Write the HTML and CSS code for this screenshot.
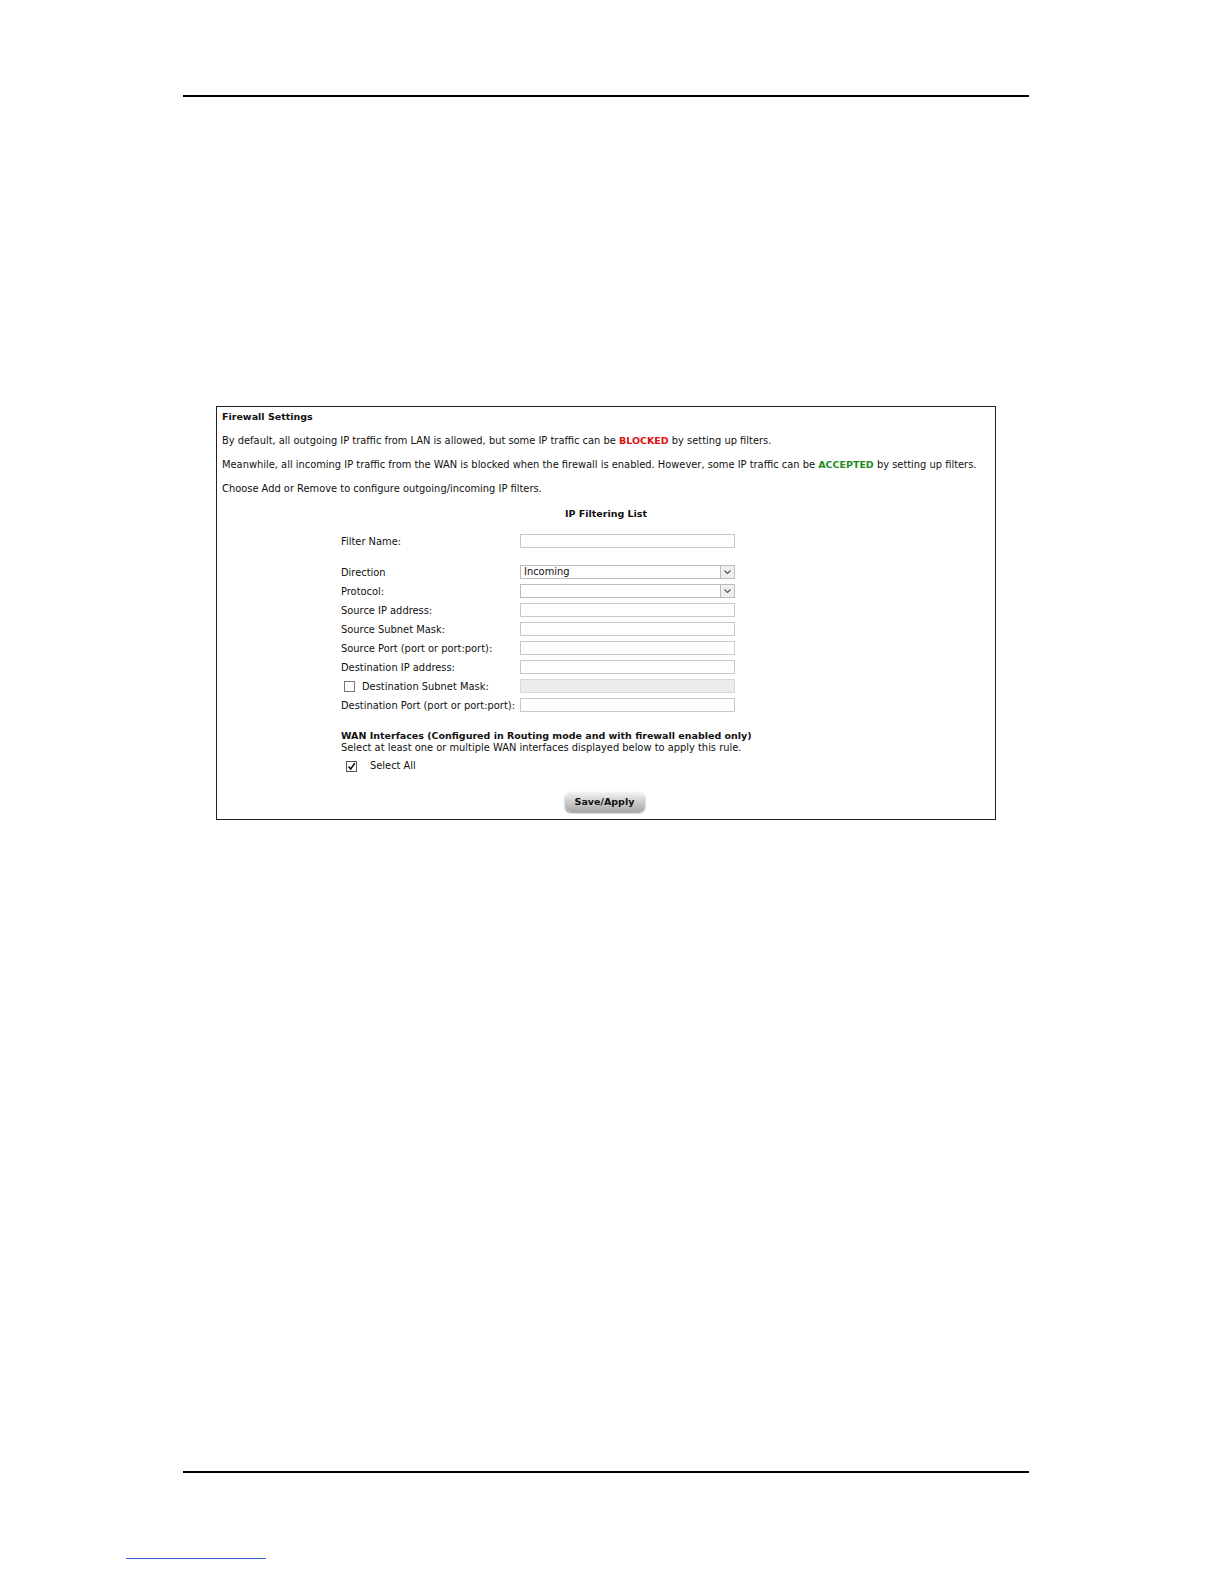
FILE: index.html
```html
<!DOCTYPE html>
<html>
<head>
<meta charset="utf-8">
<link rel="stylesheet" href="styles.css">
</head>
<body>
<div class="page">
  <div class="rule rule-top"></div>
  <div class="panel">
    <div class="title">Firewall Settings</div>
    <p class="line">By default, all outgoing IP traffic from LAN is allowed, but some IP traffic can be <span class="red">BLOCKED</span> by setting up filters.</p>
    <p class="line">Meanwhile, all incoming IP traffic from the WAN is blocked when the firewall is enabled. However, some IP traffic can be <span class="green">ACCEPTED</span> by setting up filters.</p>
    <p class="line">Choose Add or Remove to configure outgoing/incoming IP filters.</p>
    <div class="list-title">IP Filtering List</div>
    <div class="form">
      <div class="row row-name"><span class="label">Filter Name:</span><span class="field"></span></div>
      <div class="row row-dir"><span class="label">Direction</span><span class="field select"><span class="val">Incoming</span><span class="arrow"><svg width="9" height="6" viewBox="0 0 9 6"><path d="M1.5 1.5 L4.5 4.5 L7.5 1.5" fill="none" stroke="#555" stroke-width="1.2"/></svg></span></span></div>
      <div class="row"><span class="label">Protocol:</span><span class="field select"><span class="val"></span><span class="arrow"><svg width="9" height="6" viewBox="0 0 9 6"><path d="M1.5 1.5 L4.5 4.5 L7.5 1.5" fill="none" stroke="#555" stroke-width="1.2"/></svg></span></span></div>
      <div class="row"><span class="label">Source IP address:</span><span class="field"></span></div>
      <div class="row"><span class="label">Source Subnet Mask:</span><span class="field"></span></div>
      <div class="row"><span class="label">Source Port (port or port:port):</span><span class="field"></span></div>
      <div class="row"><span class="label">Destination IP address:</span><span class="field"></span></div>
      <div class="row"><span class="label"><span class="cb"></span>Destination Subnet Mask:</span><span class="field disabled"></span></div>
      <div class="row"><span class="label">Destination Port (port or port:port):</span><span class="field"></span></div>
    </div>
    <div class="wan">
      <div class="wan-title">WAN Interfaces (Configured in Routing mode and with firewall enabled only)</div>
      <div class="wan-sub">Select at least one or multiple WAN interfaces displayed below to apply this rule.</div>
      <div class="selall"><span class="cb checked"><svg width="9" height="9" viewBox="0 0 9 9"><path d="M1.5 4.5 L3.7 7 L7.8 1.3" fill="none" stroke="#111" stroke-width="1.6"/></svg></span>Select All</div>
    </div>
    <div class="btnrow"><span class="btn">Save/Apply</span></div>
  </div>
  <div class="spacer"></div>
  <div class="rule rule-bottom"></div>
  <div class="link-line"></div>
</div>
</body>
</html>
```

FILE: styles.css
```css
html, body {
  margin: 0;
  padding: 0;
  background: #fff;
}
.page {
  width: 1224px;
  height: 1584px;
  font-family: "DejaVu Sans", Verdana, sans-serif;
  font-size: 9.9px;
  color: #111;
  overflow: hidden;
}
.rule {
  height: 2px;
  background: #000;
  width: 846px;
  margin-left: 183px;
}
.rule-top {
  margin-top: 95px;
}
.panel {
  margin-top: 309px;
  margin-left: 216px;
  height: 412px;
  border: 1px solid #222;
  padding: 0 0 0 5px;
  width: 773px;
}
.title {
  font-weight: bold;
  margin-top: 3px;
  line-height: 14px;
  font-size: 9.5px;
}
.line {
  margin: 10px 0 0 0;
  line-height: 14px;
}
.red { color: #e01010; font-weight: bold; font-size: 9.5px; }
.green { color: #1d8a1d; font-weight: bold; font-size: 9.5px; }
.list-title {
  font-weight: bold;
  font-size: 9.5px;
  text-align: center;
  margin-top: 11px;
  line-height: 14px;
  padding-right: 5px;
}
.form {
  margin-top: 13px;
  margin-left: 119px;
  display: flex;
  flex-direction: column;
  gap: 5px;
}
.row {
  display: grid;
  grid-template-columns: 179px 215px;
  align-items: center;
  height: 14px;
}
.row-name {
  margin-bottom: 12px;
}
.label {
  display: flex;
  align-items: center;
  white-space: nowrap;
}
.field {
  height: 14px;
  box-sizing: border-box;
  border: 1px solid #c8c8c8;
  background: #fff;
}
.field.disabled {
  background: #ececea;
  border-color: #d8d8d6;
}
.select {
  display: flex;
  align-items: center;
  border-color: #bcbcbc;
}
.val {
  flex: 1;
  padding-left: 3px;
  line-height: 12px;
}
.arrow {
  width: 13px;
  height: 12px;
  border-left: 1px solid #bcbcbc;
  background: #efefef;
  display: flex;
  align-items: center;
  justify-content: center;
}
.cb {
  display: inline-flex;
  align-items: center;
  justify-content: center;
  width: 9px;
  height: 9px;
  border: 1px solid #777;
  background: #fff;
  margin: 0 7px 0 3px;
}
.wan {
  margin-top: 18px;
  margin-left: 119px;
}
.wan-title {
  font-weight: bold;
  font-size: 9.5px;
  line-height: 12px;
}
.wan-sub {
  line-height: 12px;
}
.selall {
  margin-top: 6px;
  display: flex;
  align-items: center;
  line-height: 12px;
}
.selall .cb {
  margin: 0 13px 0 5px;
  border-color: #555;
}
.btnrow {
  margin-top: 20px;
  display: flex;
  justify-content: center;
  padding-right: 8px;
}
.btn {
  display: inline-block;
  width: 80px;
  height: 20px;
  line-height: 20px;
  text-align: center;
  font-weight: bold;
  font-size: 9.5px;
  border-radius: 6px;
  background: linear-gradient(to bottom, #f4f4f4 0%, #d0d0d0 45%, #a8a8a8 100%);
  box-shadow: 0 1px 2px rgba(0,0,0,0.45);
  color: #111;
}
.spacer {
  height: 651px;
}
.link-line {
  margin-top: 85px;
  margin-left: 126px;
  width: 140px;
  height: 1px;
  background: #3b5bd0;
}
```
